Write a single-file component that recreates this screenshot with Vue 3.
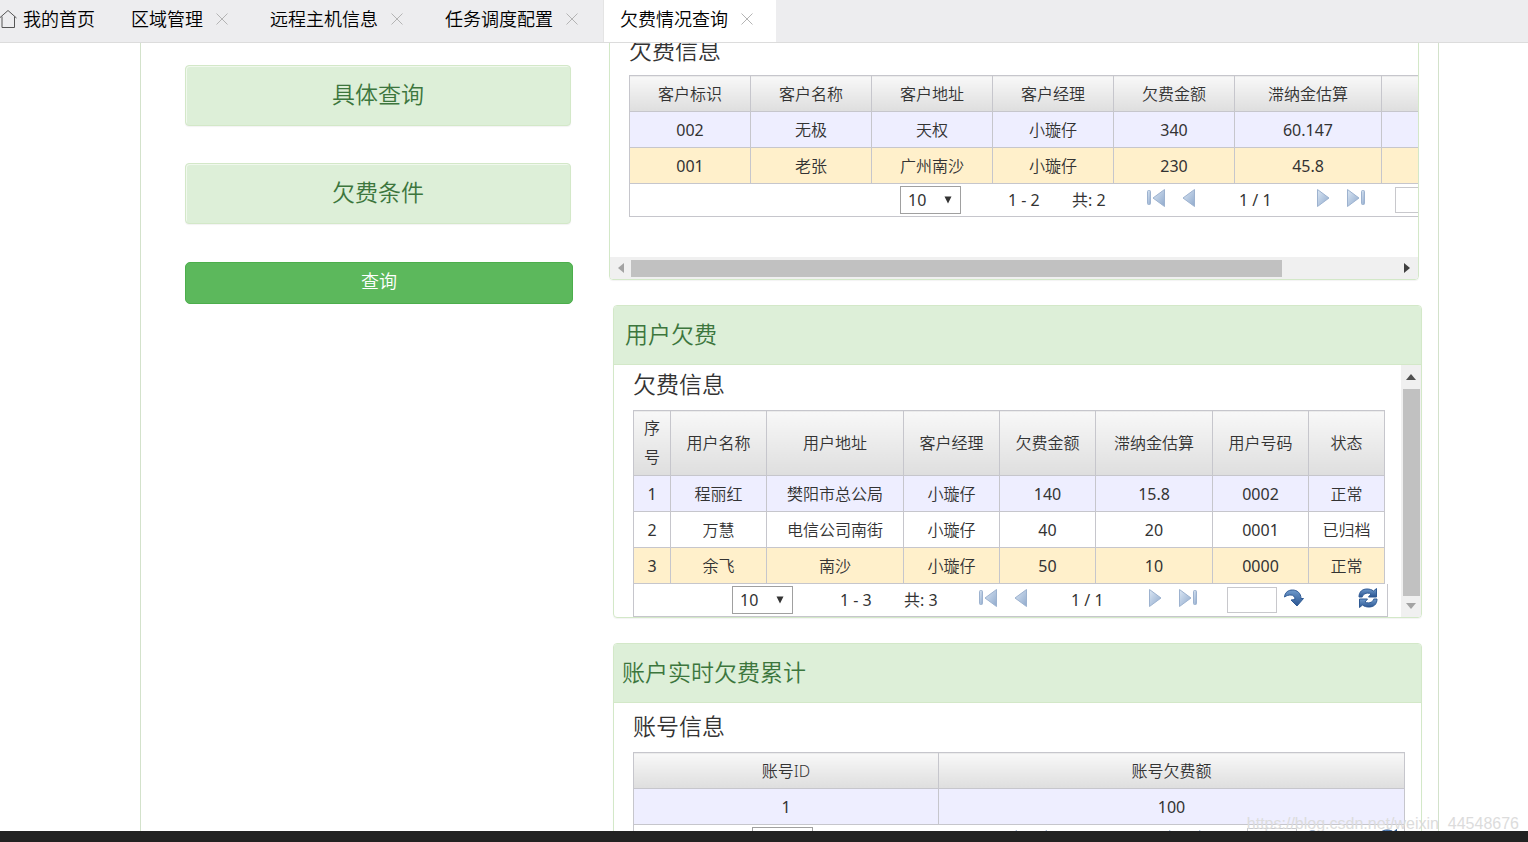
<script setup>
import { ref } from 'vue'

const tabs = ref([
  { name: '区域管理', active: false },
  { name: '远程主机信息', active: false },
  { name: '任务调度配置', active: false },
  { name: '欠费情况查询', active: true },
])

const panels = [
  {
    id: 'customer',
    title: '',
    heading: '欠费信息',
    widths: ['121px', '121px', '121px', '121px', '121px', '147px', '138px'],
    columns: ['客户标识', '客户名称', '客户地址', '客户经理', '欠费金额', '滞纳金估算', ''],
    rows: [
      ['002', '无极', '天权', '小璇仔', '340', '60.147', ''],
      ['001', '老张', '广州南沙', '小璇仔', '230', '45.8', ''],
    ],
    current: 1,
    scroll: 'x',
  },
  {
    id: 'user',
    title: '用户欠费',
    heading: '欠费信息',
    widths: ['37px', '96px', '137px', '96px', '96px', '117px', '96px', '76px'],
    columns: ['序号', '用户名称', '用户地址', '客户经理', '欠费金额', '滞纳金估算', '用户号码', '状态'],
    rows: [
      ['1', '程丽红', '樊阳市总公局', '小璇仔', '140', '15.8', '0002', '正常'],
      ['2', '万慧', '电信公司南街', '小璇仔', '40', '20', '0001', '已归档'],
      ['3', '余飞', '南沙', '小璇仔', '50', '10', '0000', '正常'],
    ],
    current: 2,
    scroll: 'y',
  },
  {
    id: 'account',
    title: '账户实时欠费累计',
    heading: '账号信息',
    widths: ['305px', 'auto'],
    columns: ['账号ID', '账号欠费额'],
    rows: [['1', '100']],
    current: -1,
    scroll: '',
  },
]

const isNumber = (text) => /^[\d.]+$/.test(text)
</script>

<template>
  <div class="page">
    <svg class="defs" aria-hidden="true">
      <defs>
        <linearGradient id="pale" x1="0" y1="0" x2="1" y2="1">
          <stop offset="0" stop-color="#dbe7f4" />
          <stop offset="1" stop-color="#8fa9cc" />
        </linearGradient>
        <linearGradient id="deep" x1="0" y1="0" x2="0" y2="1">
          <stop offset="0" stop-color="#6f9acb" />
          <stop offset="1" stop-color="#2a5592" />
        </linearGradient>
      </defs>
    </svg>

    <nav class="tabbar">
      <a class="home" href="#home">
        <svg width="18" height="20" viewBox="0 0 18 20" fill="none" stroke="#555" stroke-width="1">
          <path d="M-0.5 9 L8 1.500 L16.500 9 M2 7.500 V18.500 H14.500 V7.500" />
        </svg>
        <span>我的首页</span>
      </a>
      <div v-for="t in tabs" :key="t.name" class="tab" :class="{ active: t.active }">
        <a href="#tab">{{ t.name }}</a>
        <button type="button" class="close" :aria-label="'关闭' + t.name">
          <svg width="12" height="12" viewBox="0 0 12 12" stroke="#b4b4b4" stroke-width="1">
            <path d="M0.5 0.5 L11.5 11.5 M11.5 0.5 L0.5 11.5" />
          </svg>
        </button>
      </div>
    </nav>

    <main class="viewport">
      <div class="frame">
        <aside class="side">
          <button type="button" class="fold">具体查询</button>
          <button type="button" class="fold">欠费条件</button>
          <button type="button" class="query">查询</button>
        </aside>

        <div class="results">
          <section v-for="p in panels" :key="p.id" class="panel" :class="p.id">
            <h2 v-if="p.title">{{ p.title }}</h2>
            <div class="body">
              <div class="content">
                <h3>{{ p.heading }}</h3>
                <table>
                  <colgroup>
                    <col v-for="(w, i) in p.widths" :key="i" :style="{ width: w }" />
                  </colgroup>
                  <thead>
                    <tr>
                      <th v-for="(c, i) in p.columns" :key="i" scope="col">{{ c }}</th>
                    </tr>
                  </thead>
                  <tbody>
                    <tr v-for="(r, i) in p.rows" :key="i" :class="{ odd: i % 2 === 0, current: i === p.current }">
                      <td v-for="(c, j) in r" :key="j" :class="{ number: isNumber(c) }">{{ c }}</td>
                    </tr>
                  </tbody>
                </table>
                <div class="pager">
                  <div class="size">
                    <select aria-label="每页条数">
                      <option>10</option>
                    </select>
                    <svg width="8" height="8" viewBox="0 0 8 8"><path d="M0.5 0.5 H7.5 L4 7.5 Z" fill="#333" /></svg>
                  </div>
                  <span class="range">1 - {{ p.rows.length }}</span>
                  <span class="total">共: {{ p.rows.length }}</span>
                  <button type="button" class="first" aria-label="首页">
                    <svg width="18" height="18" viewBox="0 0 18 18" fill="url(#pale)" stroke="#9db2cf">
                      <rect x="0.5" y="1.5" width="3" height="14" rx="1" />
                      <path d="M17.5 0.5 V17.5 L6 9 Z" />
                    </svg>
                  </button>
                  <button type="button" class="prev" aria-label="上一页">
                    <svg width="13" height="18" viewBox="0 0 13 18" fill="url(#pale)" stroke="#9db2cf">
                      <path d="M12.5 0.5 V17.5 L1 9 Z" />
                    </svg>
                  </button>
                  <span class="pages">1 / 1</span>
                  <button type="button" class="next" aria-label="下一页">
                    <svg width="13" height="18" viewBox="0 0 13 18" fill="url(#pale)" stroke="#9db2cf">
                      <path d="M0.5 0.5 V17.5 L12 9 Z" />
                    </svg>
                  </button>
                  <button type="button" class="last" aria-label="末页">
                    <svg width="18" height="18" viewBox="0 0 18 18" fill="url(#pale)" stroke="#9db2cf">
                      <path d="M0.5 0.5 V17.5 L12 9 Z" />
                      <rect x="14.5" y="1.5" width="3" height="14" rx="1" />
                    </svg>
                  </button>
                  <input type="text" aria-label="页码" />
                  <button type="button" class="go" aria-label="跳转">
                    <svg width="20" height="18" viewBox="0 0 20 18" fill="url(#deep)" stroke="#2f5a94" stroke-width="1">
                      <path d="M0.5 8 C1 3 4.500 1 8.500 1 C13 1 17 4 17 9.500 H19.500 L13 17 L7 11 L11 10.500 C11 7.500 9 6 7 6 C4.500 6 2.500 6.500 0.500 8 Z" />
                    </svg>
                  </button>
                  <button type="button" class="reload" aria-label="刷新">
                    <svg width="20" height="20" viewBox="0 0 20 20" fill="url(#deep)" stroke="#2f5a94" stroke-width="1">
                      <path d="M1 9 C1 3.500 4.500 1 9 1 C11.500 1 13.500 1.500 15.500 3 L18.500 0.500 V9 H10.500 L13 6 C11 4.800 8.500 4.800 6.500 6 C5 7 4.500 8 4.300 9 Z" />
                      <path d="M19 11 C19 16.500 15.500 19 11 19 C8.500 19 6.500 18.500 4.500 17 L1.500 19.500 V11 H9.500 L7 14 C9 15.200 11.500 15.200 13.500 14 C15 13 15.500 12 15.700 11 Z" />
                    </svg>
                  </button>
                </div>
              </div>
              <div v-if="p.scroll === 'y'" class="bar-y" aria-hidden="true">
                <svg width="10" height="6" viewBox="0 0 10 6"><path d="M0 6 L5 0 L10 6 Z" fill="#505050" /></svg>
                <div class="thumb"></div>
                <svg width="10" height="6" viewBox="0 0 10 6"><path d="M0 0 H10 L5 6 Z" fill="#a3a3a3" /></svg>
              </div>
            </div>
            <div v-if="p.scroll === 'x'" class="bar-x" aria-hidden="true">
              <svg width="6" height="10" viewBox="0 0 6 10"><path d="M6 0 V10 L0 5 Z" fill="#a3a3a3" /></svg>
              <div class="track"><div class="thumb"></div></div>
              <svg width="6" height="10" viewBox="0 0 6 10"><path d="M0 0 V10 L6 5 Z" fill="#404040" /></svg>
            </div>
          </section>
        </div>
      </div>
      <div class="mark">https://blog.csdn.net/weixin_44548676</div>
    </main>
    <footer class="strip"></footer>
  </div>
</template>

<style>
body {
  margin: 0;
}
</style>

<style scoped>
.page,
.page * {
  box-sizing: border-box;
}
.page {
  display: flex;
  flex-direction: column;
  height: 100vh;
  overflow: hidden;
  background: #fff;
  color: #333;
  font: 350 16px/28px "Noto Sans", "Noto Sans CJK SC", sans-serif;
}
svg {
  display: block;
}
.defs {
  position: absolute;
  width: 0;
  height: 0;
}
button {
  font: inherit;
  padding: 0;
  border: 0;
  background: none;
}
.tabbar {
  display: flex;
  flex: none;
  height: 43px;
  background: #ededef;
  border-bottom: 1px solid #dcdcdc;
  font-size: 18px;
}
.tabbar a {
  color: #000;
  text-decoration: none;
  white-space: nowrap;
}
.home {
  display: flex;
  align-items: center;
  gap: 5px;
  width: 114px;
  padding-bottom: 5px;
}
.tab {
  display: flex;
  align-items: center;
  gap: 13px;
  padding: 0 25px 5px 17px;
}
.tab.active {
  padding: 0 23px 5px 16px;
  background: #fff;
  border-left: 1px solid #e4e4e4;
}
.viewport {
  position: relative;
  flex: 1;
  min-height: 0;
  overflow: hidden;
}
.frame {
  display: flex;
  gap: 36px;
  margin: 0 89px 0 140px;
  padding: 0 16px 0 44px;
  border: solid #d3e2cb;
  border-width: 0 1px;
}
.side {
  display: flex;
  flex-direction: column;
  flex: 0 1 388px;
  padding-top: 22px;
}
.fold {
  height: 61px;
  margin: 0 2px 37px 0;
  padding-bottom: 4px;
  border: 1px solid #d3e8c8;
  border-radius: 4px;
  background: #ddefd8;
  box-shadow: 0 1px 1px rgba(0, 0, 0, 0.05), inset 1px 1px 0 #f0f8ed;
  color: #3c763d;
  font-size: 23px;
}
.query {
  height: 42px;
  margin-top: 1px;
  padding-bottom: 4px;
  border: 1px solid #4cae4c;
  border-radius: 5px;
  background: #5cb85c;
  color: #fff;
  font-size: 18px;
}
.results {
  display: flex;
  flex-direction: column;
  flex: 1;
  gap: 25px;
  min-width: 0;
}
.panel {
  margin-left: 4px;
  border: 1px solid #d3e8c8;
  border-radius: 4px;
  box-shadow: 0 1px 1px rgba(0, 0, 0, 0.05);
  overflow: hidden;
}
.customer {
  margin: -13px 3px 0 0;
}
h2,
h3 {
  margin: 0;
  font-weight: 350;
  font-size: 23px;
}
h2 {
  height: 59px;
  padding-left: 11px;
  border-bottom: 1px solid #d3e8c8;
  background: #ddefd8;
  color: #3c763d;
  line-height: 56px;
}
.account h2 {
  padding-left: 8px;
}
h3 {
  margin-bottom: 7px;
  line-height: 38px;
}
.customer h3 {
  margin-bottom: 6px;
}
.body {
  display: flex;
}
.content {
  flex: 1;
  min-width: 0;
  padding-left: 19px;
}
.customer .content {
  padding-bottom: 40px;
  overflow: hidden;
}
.account .content {
  padding: 4px 16px 0 19px;
}
table {
  table-layout: fixed;
  border-collapse: collapse;
}
.customer table {
  width: 891px;
}
.user table {
  width: 752px;
}
.account table {
  width: 100%;
}
th,
td {
  height: 36px;
  padding: 0;
  border: 1px solid #c6c6cc;
  font-weight: 350;
  text-align: center;
}
td.number {
  font-weight: 400;
}
th {
  padding: 0 8px;
  background: linear-gradient(#f8f8f8, #dedede);
}
.user th {
  height: 65px;
  line-height: 29px;
}
.odd {
  background: #eeeeff;
}
.current {
  background: #fff0cb;
}
.pager {
  display: flex;
  align-items: center;
  height: 33px;
  border: solid #c6c6cc;
  border-width: 0 1px 1px;
  font-weight: 400;
}
.customer .pager {
  width: 891px;
  padding-left: 270px;
}
.user .pager {
  width: 755px;
  padding-left: 98px;
}
.account .pager {
  padding-left: 118px;
}
.pager > * {
  flex: none;
  white-space: nowrap;
}
.pager button {
  margin-bottom: 4px;
}
.size {
  position: relative;
  margin-right: 47px;
}
.size svg {
  position: absolute;
  right: 9px;
  top: 10px;
  pointer-events: none;
}
select {
  display: block;
  appearance: none;
  width: 61px;
  height: 28px;
  padding: 0 7px;
  border: 1px solid #a0a0a0;
  border-radius: 0;
  background: #fff;
  color: #333;
  font: inherit;
  line-height: 26px;
}
.range {
  width: 36px;
  margin-right: 28px;
}
.total {
  width: 35px;
  margin-right: 40px;
}
.first {
  margin-right: 17px;
}
.prev {
  margin-right: 44px;
}
.pages {
  width: 35px;
  margin-right: 43px;
}
.next {
  margin-right: 17px;
}
.last {
  margin-right: 30px;
}
.pager input {
  width: 50px;
  height: 26px;
  margin-right: 7px;
  padding: 0 4px;
  border: 1px solid #c8c8cc;
  font: inherit;
}
.go {
  margin-right: 54px;
}
.bar-y {
  display: flex;
  flex-direction: column;
  align-items: center;
  width: 20px;
  padding: 9px 0 8px;
  background: #f0f0f0;
}
.bar-y .thumb {
  flex: 1;
  width: 17px;
  margin: 9px 0 7px;
  background: #c1c1c1;
}
.bar-x {
  display: flex;
  align-items: center;
  height: 22px;
  padding: 0 8px;
  background: #f0f0f0;
}
.track {
  flex: 1;
  margin: 0 7px;
}
.track .thumb {
  width: 85%;
  height: 17px;
  background: #c1c1c1;
}
.mark {
  position: absolute;
  right: 9px;
  bottom: -7px;
  color: #dcdcdc;
  font: 16px/28px "Liberation Sans", Arial, sans-serif;
}
.strip {
  flex: none;
  height: 11px;
  background: #222;
}
</style>
